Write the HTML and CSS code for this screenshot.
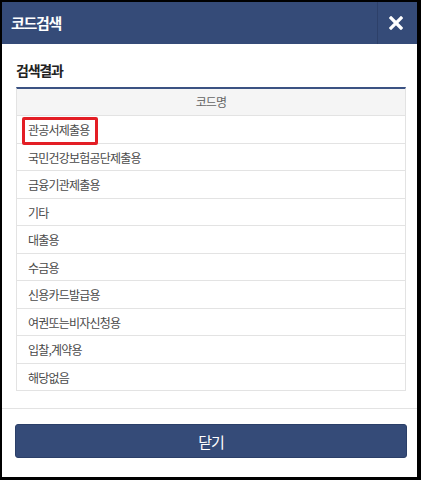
FILE: index.html
```html
<!DOCTYPE html>
<html lang="ko">
<head>
<meta charset="utf-8">
<link rel="stylesheet" href="styles.css">
</head>
<body>
<div class="frame">
  <header class="head">
    <h1 class="title">코드검색</h1>
    <button class="close" aria-label="닫기">
      <svg width="14" height="14" viewBox="0 0 14 14"><path d="M2 2 L12 12 M12 2 L2 12" stroke="#fff" stroke-width="3.2" stroke-linecap="square"/></svg>
    </button>
  </header>
  <main class="content">
    <h2 class="sub">검색결과</h2>
    <div class="table">
      <div class="th">코드명</div>
      <div class="row"><span class="mark">관공서제출용</span></div>
      <div class="row">국민건강보험공단제출용</div>
      <div class="row">금융기관제출용</div>
      <div class="row">기타</div>
      <div class="row">대출용</div>
      <div class="row">수금용</div>
      <div class="row">신용카드발급용</div>
      <div class="row">여권또는비자신청용</div>
      <div class="row">입찰,계약용</div>
      <div class="row">해당없음</div>
    </div>
  </main>
  <footer class="foot">
    <button class="btn">닫기</button>
  </footer>
</div>
</body>
</html>
```
FILE: styles.css
```css
* { box-sizing: border-box; }
html, body { margin: 0; padding: 0; background: #000; }
body { font-family: "Noto Sans CJK KR", "Noto Sans", sans-serif; }
.frame {
  width: 421px;
  height: 480px;
  border-style: solid;
  border-color: #000;
  border-width: 2px 4px 3px 2px;
  background: #fff;
  display: flex;
  flex-direction: column;
}
.head {
  height: 42px;
  background: #354b78;
  display: flex;
  align-items: center;
  padding-left: 9px;
}
.title {
  margin: 0;
  flex: 1;
  color: #fff;
  font-size: 15px;
  font-weight: 700;
  letter-spacing: -1.3px;
  line-height: 20px;
}
.close {
  width: 40px;
  height: 42px;
  border: 0;
  border-left: 1px solid #2d4069;
  background: transparent;
  padding: 0;
  display: flex;
  align-items: center;
  justify-content: center;
  padding-right: 3px;
}
.close svg { display: block; }
.content {
  padding: 16px 11px 0 14px;
}
.sub {
  margin: 0 0 7px;
  font-size: 14px;
  font-weight: 700;
  color: #222;
  line-height: 20px;
  letter-spacing: -1.2px;
}
.table {
  border-top: 2px solid #3b5283;
  border-left: 1px solid #e3e3e3;
  border-right: 1px solid #e3e3e3;
}
.th {
  height: 27px;
  background: #f5f5f5;
  border-bottom: 1px solid #e3e3e3;
  text-align: center;
  font-size: 12px;
  color: #666;
  line-height: 26px;
  letter-spacing: -0.8px;
}
.row {
  height: 27.5px;
  border-bottom: 1px solid #e3e3e3;
  padding-left: 11px;
  font-size: 12px;
  color: #4a4a4a;
  line-height: 27px;
  letter-spacing: -0.8px;
  position: relative;
}
.mark {
  display: inline-block;
  position: relative;
  line-height: 27px;
  vertical-align: top;
}
.mark::after {
  content: "";
  position: absolute;
  left: -6px;
  right: -9px;
  top: 1px;
  bottom: -2px;
  border: 3px solid #e31e25;
  border-radius: 2px;
}
.foot {
  margin-top: 17px;
  border-top: 1px solid #e3e3e3;
  padding: 15px 10px 0 13px;
}
.btn {
  display: block;
  width: 100%;
  height: 34px;
  background: #354b78;
  border: 1px solid #2b3f68;
  border-radius: 3px;
  color: #fff;
  font-family: "Noto Sans CJK KR", "Noto Sans", sans-serif;
  font-size: 15px;
  letter-spacing: -1px;
  padding: 0;
}
```
